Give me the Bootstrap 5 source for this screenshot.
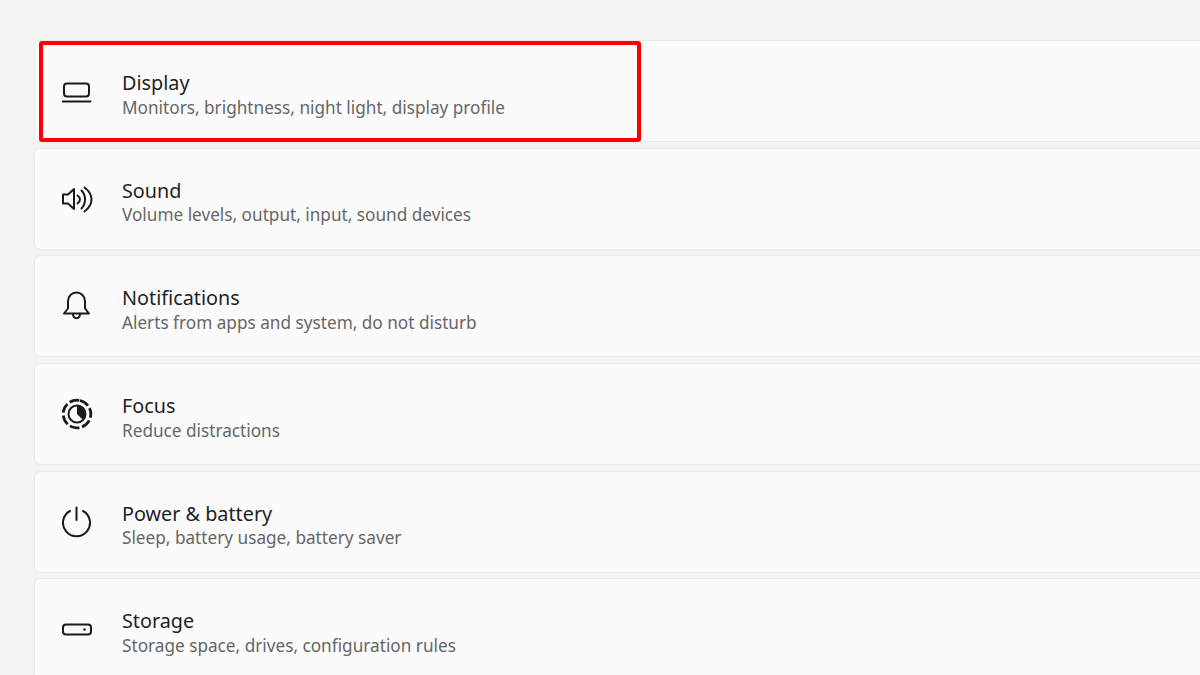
<!DOCTYPE html>
<html lang="en">
<head>
<meta charset="utf-8">
<title>Settings</title>
<link href="https://cdn.jsdelivr.net/npm/bootstrap@5.3.0/dist/css/bootstrap.min.css" rel="stylesheet">
<style>
html,body{height:675px;overflow:hidden}
body{background:#f3f3f3;font-family:"Noto Sans","Liberation Sans",sans-serif}
.set-list{padding:40px 0 0 34px;width:1240px;gap:5.7px;position:relative}
.set-row{height:102px;background:#fbfbfb;border:1.5px solid #e9e9e9;border-radius:6px;padding-left:27px;gap:28px;flex:none}
.set-ico{width:32px;height:32px;flex:none;color:#1b1b1b}
.set-ico svg{display:block;width:32px;height:32px;fill:none;stroke:currentColor;stroke-width:2;stroke-linecap:round;stroke-linejoin:round}
.set-text{padding-top:7px}
.set-title{font-size:19.8px;line-height:26px;color:#1f1f1f}
.set-sub{font-size:17.2px;line-height:22.5px;color:#666;margin-top:.5px}
.red-box{position:absolute;left:39px;top:41px;width:602px;height:101px;border:4px solid #fe0000;border-radius:3px}
</style>
</head>
<body>
<div class="set-list d-flex flex-column">
  <div class="set-row d-flex align-items-center">
    <div class="set-ico"><svg viewBox="0 0 32 32"><rect x="2" y="8.500" width="25" height="13" rx="3"/><path d="M.5 26.500h28"/></svg></div>
    <div class="set-text"><div class="set-title">Display</div><div class="set-sub">Monitors, brightness, night light, display profile</div></div>
  </div>
  <div class="set-row d-flex align-items-center">
    <div class="set-ico"><svg viewBox="0 0 32 32"><path d="M1 11.500h5l6-5.500v20l-6-5.500h-5z"/><path d="M15.500 12.500c3.300 2.500 3.300 5.500 0 8M19.500 7.500c4.700 5 4.700 13 0 18M22.500 4.500c9.300 7 9.300 17 0 24"/></svg></div>
    <div class="set-text"><div class="set-title">Sound</div><div class="set-sub">Volume levels, output, input, sound devices</div></div>
  </div>
  <div class="set-row d-flex align-items-center">
    <div class="set-ico"><svg viewBox="0 0 32 32"><path d="M6 18.500V11a8.500 8.500 0 0 1 17 0v7.500l4 5H2z"/><path d="M11 24c0 5.500 7 5.500 7 0"/></svg></div>
    <div class="set-text"><div class="set-title">Notifications</div><div class="set-sub">Alerts from apps and system, do not disturb</div></div>
  </div>
  <div class="set-row d-flex align-items-center">
    <div class="set-ico"><svg viewBox="0 0 32 32"><circle cx="15" cy="16" r="13.800" stroke-width="2.800" stroke-linecap="butt" stroke-dasharray="9.800 2.800" transform="rotate(-78 15 16)"/><circle cx="15" cy="16" r="8.500"/><path d="M15 7.500a8.500 8.500 0 0 1 6 14.500L15 16z" fill="currentColor" stroke="none"/></svg></div>
    <div class="set-text"><div class="set-title">Focus</div><div class="set-sub">Reduce distractions</div></div>
  </div>
  <div class="set-row d-flex align-items-center">
    <div class="set-ico"><svg viewBox="0 0 32 32"><path d="M14.500 1.500V14"/><path d="M8 5a13.500 13.500 0 1 0 13 0"/></svg></div>
    <div class="set-text"><div class="set-title">Power &amp; battery</div><div class="set-sub">Sleep, battery usage, battery saver</div></div>
  </div>
  <div class="set-row d-flex align-items-center">
    <div class="set-ico"><svg viewBox="0 0 32 32"><rect x="1" y="11.500" width="28" height="10" rx="3"/><circle cx="22.500" cy="16.500" r="1.300" fill="currentColor" stroke="none"/></svg></div>
    <div class="set-text"><div class="set-title">Storage</div><div class="set-sub">Storage space, drives, configuration rules</div></div>
  </div>
  <div class="red-box"></div>
</div>
</body>
</html>
